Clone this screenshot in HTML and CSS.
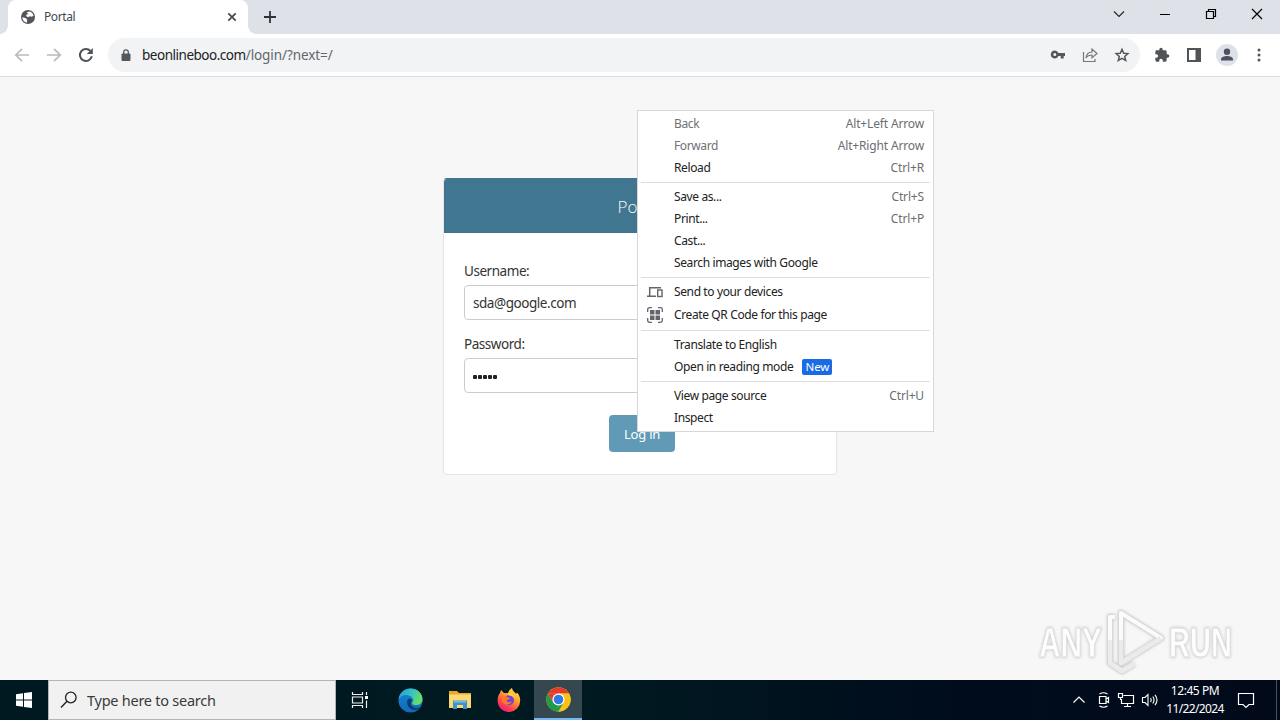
FILE: index.html
```html
<!DOCTYPE html>
<html lang="en">
<head>
<meta charset="utf-8">
<title>Portal</title>
<link rel="stylesheet" href="styles.css">
</head>
<body>
<div class="screen">
  <header class="tabstrip">
    <div class="tab">
      <svg class="globe" width="16" height="16" viewBox="0 0 16 16"><circle cx="8" cy="8" r="7" fill="#53575c"/><path d="M2.300 8.300L5.500 9l1.700 1.500-.4 3.200C4.500 13.300 2.300 11.300 2.300 8.300zM6.500 3.200l3-.7c2 .5 3.500 2 4 4l-1.500 1.300-2.200-.5L8 8.200 6.200 7l.3-1.500L8.500 5z" fill="#fff"/></svg>
      <span class="tab-title">Portal</span>
      <svg class="tab-close" width="10" height="10" viewBox="0 0 10 10"><path d="M1.300 1.300l7.400 7.400M8.700 1.300L1.300 8.700" stroke="#45494d" stroke-width="1.700"/></svg>
    </div>
    <svg class="new-tab" width="14" height="14" viewBox="0 0 14 14"><path d="M7 1v12M1 7h12" stroke="#2f3236" stroke-width="1.800"/></svg>
    <div class="window-controls">
      <svg width="12" height="12" viewBox="0 0 12 12"><path d="M1 3.500l5 5 5-5" fill="none" stroke="#222" stroke-width="1.100"/></svg>
      <svg width="12" height="12" viewBox="0 0 12 12"><path d="M1 6.500h10" stroke="#000"/></svg>
      <svg width="12" height="12" viewBox="0 0 12 12"><path d="M1.500 3.500h7v7h-7zM3.500 3.500v-2h7v7h-2" fill="none" stroke="#000" stroke-width="1.200"/></svg>
      <svg width="12" height="12" viewBox="0 0 12 12"><path d="M1 1l10 10M11 1L1 11" stroke="#000" stroke-width="1.200"/></svg>
    </div>
  </header>
  <nav class="toolbar">
    <svg class="nav-icon" viewBox="0 0 16 16"><path d="M15 8H2M8 1.800L1.800 8 8 14.200" fill="none" stroke="#b9bbbe" stroke-width="1.700"/></svg>
    <svg class="nav-icon" viewBox="0 0 16 16"><path d="M1 8h13M8 1.800L14.200 8 8 14.200" fill="none" stroke="#b9bbbe" stroke-width="1.700"/></svg>
    <svg class="nav-icon" viewBox="0 0 16 16"><path d="M13.800 9.300A6 6 0 1 1 12.400 3.900" fill="none" stroke="#4e5256" stroke-width="2"/><path d="M14.800 1v6H8.800z" fill="#4e5256"/></svg>
    <div class="omnibox">
      <svg width="10" height="13" viewBox="0 0 10 13"><rect x=".5" y="4.500" width="9" height="7.500" rx="1" fill="#54585d"/><path d="M2.700 5V3.200a2.300 2.300 0 0 1 4.600 0V5" fill="none" stroke="#54585d" stroke-width="1.300"/></svg>
      <span class="url"><span class="url-host">beonlineboo.com</span><span class="url-path">/login/?next=/</span></span>
      <div class="omni-actions">
        <svg width="16" height="16" viewBox="0 0 16 16"><path fill="#54585d" fill-rule="evenodd" d="M4.800 3.500a4 4 0 1 0 3.700 5.600h2.200v2.300h3V9.100H15V6H8.500a4 4 0 0 0-3.700-2.500zm0 2.600a1.500 1.500 0 1 1 0 3 1.500 1.500 0 0 1 0-3z"/></svg>
        <svg width="16" height="16" viewBox="0 0 16 16"><path d="M1.500 5v9.500h11.500V12" fill="none" stroke="#74787c" stroke-width="1.200"/><path d="M10 5V2l5 4.500-5 4.200V8C7 8 5.400 8.800 4 11c.3-3.500 2.500-5.800 6-6z" fill="none" stroke="#74787c" stroke-width="1.200"/></svg>
        <svg width="16" height="16" viewBox="0 0 16 16"><path d="M8 2.300l1.700 3.900 4.200.4-3.200 2.800 1 4.100L8 11.400l-3.700 2.100 1-4.100-3.200-2.800 4.200-.4z" fill="none" stroke="#54585d" stroke-width="1.500"/></svg>
      </div>
    </div>
    <div class="toolbar-actions">
      <svg width="16" height="16" viewBox="0 0 24 24"><path fill="#505459" d="M20.500 11H19V7a2 2 0 0 0-2-2h-4V3.500a2.500 2.500 0 0 0-5 0V5H4a2 2 0 0 0-2 2v3.800h1.500a2.700 2.700 0 0 1 0 5.400H2V20a2 2 0 0 0 2 2h3.800v-1.500a2.700 2.700 0 0 1 5.400 0V22H17a2 2 0 0 0 2-2v-4h1.500a2.500 2.500 0 0 0 0-5z"/></svg>
      <svg width="16" height="16" viewBox="0 0 16 16"><path fill="#505459" fill-rule="evenodd" d="M1 1h14v14H1zm2 2v10h6.500V3z"/></svg>
      <svg width="22" height="22" viewBox="0 0 22 22"><circle cx="11" cy="11" r="11" fill="#dfe1e9"/><circle cx="11" cy="7.700" r="3.200" fill="#4b5160"/><path d="M5 16.500v-1.300c0-2 3.500-3.200 6-3.200s6 1.200 6 3.200v1.300z" fill="#4b5160"/></svg>
      <svg width="4" height="16" viewBox="0 0 4 16"><g fill="#505459"><circle cx="2" cy="3" r="1.500"/><circle cx="2" cy="8" r="1.500"/><circle cx="2" cy="13" r="1.500"/></g></svg>
    </div>
  </nav>

  <main class="page">
    <form class="card">
      <h1 class="card-header">Portal</h1>
      <div class="card-body">
        <label class="label">Username:</label>
        <div class="field"><span>sda@google.com</span></div>
        <label class="label">Password:</label>
        <div class="field"><i class="dot"></i><i class="dot"></i><i class="dot"></i><i class="dot"></i><i class="dot"></i></div>
        <button class="login" type="button">Log in</button>
      </div>
    </form>
  </main>

  <footer class="taskbar">
    <div class="start"><svg width="16" height="16" viewBox="0 0 16 16"><path fill="#fff" d="M0 2.200L7 1.200V7.400H0zM8 1.100L16 0v7.400H8zM0 8.400h7v6.400l-7-1zM8 8.400h8V16l-8-1.100z"/></svg></div>
    <div class="search">
      <svg width="18" height="18" viewBox="0 0 18 18"><circle cx="10.800" cy="6.500" r="5.300" fill="none" stroke="#222" stroke-width="1.300"/><path d="M7 10.300L1 16.500" stroke="#222" stroke-width="1.400"/></svg>
      <span class="search-text">Type here to search</span>
    </div>
    <div class="apps">
      <div class="app"><svg width="18" height="18" viewBox="0 0 18 18"><path d="M1.500 1v2.500h10V1M1.500 17v-2.500h10V17M1.500 6h10v6h-10zM15.500 1v3M15.500 9.500V17" fill="none" stroke="#e8eef0" stroke-width="1.200"/><path d="M14 5h3v3h-3z" fill="#fff"/></svg></div>
      <div class="app"><svg width="25" height="25" viewBox="0 0 25 25">
        <defs><linearGradient id="eg" x1="0" y1="0" x2="1" y2=".4"><stop offset="0" stop-color="#239ed5"/><stop offset=".55" stop-color="#35c1c7"/><stop offset="1" stop-color="#68dc67"/></linearGradient><linearGradient id="eb" x1="0" y1="0" x2="0" y2="1"><stop offset="0" stop-color="#1688d6"/><stop offset="1" stop-color="#1268b8"/></linearGradient></defs>
        <circle cx="12.500" cy="12.500" r="12" fill="url(#eb)"/>
        <path d="M.6 11.500C1.500 4.500 6.500.5 12.500.5c7 0 12 5 12 10.500 0 4-3 6-6.500 6-2.500 0-4-.8-4-1.800 0-.7 1.200-1.200 1.200-3.200C15.200 9.500 12 7 8 7 4.500 7 1.800 8.800.6 11.500z" fill="url(#eg)"/>
        <path d="M9.500 12c-1.500 5 2 9.500 7 10 2.500 0 4.500-1 6-2.500-3 1-8 .8-9.500-3C12.500 14 14 13 14 11.500c-1.500-1.300-3.800-1-4.500.5z" fill="#0b3d70"/></svg></div>
      <div class="app"><svg width="22" height="20" viewBox="0 0 22 20"><path d="M0 1h8l2 2h12v15H0z" fill="#e9a82b"/><path d="M0 4.500h22V18H0z" fill="#fcd873"/><path d="M4 19v-8.500h14V19h-4v-4H8v4z" fill="#3f93cf"/><path d="M5 11h12v1.500H5z" fill="#79bce5"/></svg></div>
      <div class="app fox"><svg width="24" height="24" viewBox="0 0 24 24"><defs><linearGradient id="fx" x1=".8" y1="0" x2=".2" y2="1"><stop offset="0" stop-color="#fff044"/><stop offset=".4" stop-color="#ff9a2e"/><stop offset=".75" stop-color="#ff3b50"/><stop offset="1" stop-color="#e31587"/></linearGradient></defs>
        <path d="M3 5l1-3 3 3c1 0 3-.2 4 .2C11.500 3 13 1 15 0c.3 3 3 4 4.200 6l.7-1.500c2 2 3.300 4.500 3.300 8A11.300 11.300 0 0 1 .6 13C.5 9.500 1.300 7 3 5z" fill="url(#fx)"/><circle cx="12" cy="12.300" r="5" fill="#7542d6"/><path d="M5 8c2-.5 4 .2 6 1.500 1 .2 2 .4 2 1-1 1.300-3 .8-3.500 2.500 1.500 2 4.500 1 5.500 0-1 4-7 5-9.500 1C4.500 12 5 10 5 8z" fill="#ff782d"/><path d="M11 5c3-.5 7 2 7.500 6.500C17 8.500 14 7.500 11 7z" fill="#ffd33d"/></svg></div>
      <div class="app active"><svg width="25" height="25" viewBox="0 0 24 24"><circle cx="12" cy="12" r="11.700" fill="#fbc116"/><path d="M1.870 6.150A11.700 11.700 0 0 1 22.130 6.150L12 6.150z" fill="#e33b2e"/><path d="M1.870 6.150L6.940 14.930 12 18l-1 5.660A11.700 11.700 0 0 1 1.870 6.150z" fill="#229a4c"/><path d="M12 23.700L17.060 14.930 12 12l-5.060 2.930 5.060 3.500-1.500 5.200z" fill="#229a4c"/><path d="M22.130 6.150A11.700 11.700 0 0 1 12 23.700L17.060 14.930 12 6.150z" fill="#fbc116"/><path d="M1.870 6.150L7 15l5-3V6.150z" fill="#e33b2e"/><circle cx="12" cy="12" r="5.850" fill="#fff"/><circle cx="12" cy="12" r="4.600" fill="#3279e6"/></svg></div>
    </div>
    <div class="tray">
      <svg width="14" height="14" viewBox="0 0 14 14"><path d="M1.500 9.500L7 4l5.500 5.500" fill="none" stroke="#fff" stroke-width="1.200"/></svg>
      <svg width="14" height="18" viewBox="0 0 14 18"><path d="M2.500 5.500h6.500v7H2.500zM9 8l2.500-1.500v5L9 10M2.500 3q4-2.500 8 0M2.500 15q4 2.500 8 0" fill="none" stroke="#fff" stroke-width="1.200"/></svg>
      <svg width="18" height="16" viewBox="0 0 18 16"><path d="M6.500 3.500h10v8H4.500V7M10.500 11.500v3M7 14.500h7M1.500 1.500h4v4h-4zM3.500 5.500V8" fill="none" stroke="#fff" stroke-width="1.200"/></svg>
      <svg width="18" height="16" viewBox="0 0 18 16"><path d="M1.500 5.500h2.500l3-3v11l-3-3H1.500zM9.500 6q1.400 2 0 4M11.800 4.500q2.500 3.500 0 7M14 2.800q4 5.200 0 10.400" fill="none" stroke="#fff" stroke-width="1.100"/></svg>
      <div class="clock"><span class="time">12:45 PM</span><span class="date">11/22/2024</span></div>
      <svg width="18" height="18" viewBox="0 0 18 18"><path d="M1.500 2.500h15v11H12l-3 3-3-3H1.500z" fill="none" stroke="#fff" stroke-width="1.200"/></svg>
    </div>
  </footer>

  <div class="menu">
    <div class="item disabled"><span>Back</span><span class="key">Alt+Left Arrow</span></div>
    <div class="item disabled"><span>Forward</span><span class="key">Alt+Right Arrow</span></div>
    <div class="item"><span>Reload</span><span class="key">Ctrl+R</span></div>
    <hr class="sep">
    <div class="item"><span>Save as...</span><span class="key">Ctrl+S</span></div>
    <div class="item"><span>Print...</span><span class="key">Ctrl+P</span></div>
    <div class="item"><span>Cast...</span></div>
    <div class="item"><span>Search images with Google</span></div>
    <hr class="sep">
    <div class="item"><svg class="menu-icon" viewBox="0 0 16 16"><path d="M14 3.800H2.700V12M0 12.300h9" fill="none" stroke="#62666a" stroke-width="1.500"/><rect x="10.700" y="6" width="4.300" height="6.500" fill="none" stroke="#62666a" stroke-width="1.400"/></svg><span>Send to your devices</span></div>
    <div class="item tall"><svg class="menu-icon" viewBox="0 0 16 16"><path d="M.7 5V2.500Q.7.700 2.500.7H5M11 .7h2.500q1.800 0 1.800 1.800V5M15.300 11v2.500q0 1.800-1.800 1.800H11M5 15.300H2.500Q.7 15.300.7 13.500V11" fill="none" stroke="#62666a" stroke-width="1.300"/><path d="M3 3h4.500v4.500H3zM8.500 3H13v4.500H8.500zM3 8.500h4.500V13H3zM8.500 8.500H13V13H8.500z" fill="#62666a"/></svg><span>Create QR Code for this page</span></div>
    <hr class="sep">
    <div class="item"><span>Translate to English</span></div>
    <div class="item"><span>Open in reading mode</span><span class="badge">New</span></div>
    <hr class="sep">
    <div class="item"><span>View page source</span><span class="key">Ctrl+U</span></div>
    <div class="item"><span>Inspect</span></div>
  </div>

  <svg class="watermark" width="230" height="70" viewBox="0 0 230 70">
    <g fill="#fdfdfd" stroke="#dcdcdc" stroke-width=".8">
      <text x="8" y="51" textLength="63" lengthAdjust="spacingAndGlyphs">ANY</text>
      <text x="138" y="51" textLength="63" lengthAdjust="spacingAndGlyphs">RUN</text>
    </g>
    <g fill="none" stroke-linejoin="round">
      <path id="play" d="M84 11h-5v46l12 8 12-7M90 7v50l40-25z" stroke="#d8d8d8" stroke-width="6"/>
      <path d="M84 11h-5v46l12 8 12-7M90 7v50l40-25z" stroke="#fbfbfb" stroke-width="4"/>
      <path d="M79 34v23l12 8 12-7M90 34v23l40-25" stroke="#ebebeb" stroke-width="4"/>
    </g>
  </svg>
</div>
</body>
</html>
```
FILE: styles.css
```css
* { box-sizing: border-box; }
body { margin: 0; font-family: "Noto Sans", "Open Sans", sans-serif; }
svg { display: block; flex: none; }
.screen { position: relative; width: 1280px; height: 720px; display: flex; flex-direction: column; overflow: hidden; background: #f7f7f7; white-space: nowrap; }

.tabstrip { height: 34px; flex: none; display: flex; align-items: center; background: #dee1e8; padding-left: 8px; }
.tab { position: relative; width: 240px; height: 34px; display: flex; align-items: center; padding: 0 11px 0 12px; background: #fff; border-radius: 8px 8px 0 0; }
.tab::before, .tab::after { content: ""; position: absolute; bottom: 0; width: 8px; height: 8px; }
.tab::before { left: -8px; background: radial-gradient(circle at 0 0, #dee1e8 7.500px, #fff 8px); }
.tab::after { right: -8px; background: radial-gradient(circle at 100% 0, #dee1e8 7.500px, #fff 8px); }
.tab-title { margin-left: 8px; padding-bottom: 1px; font-size: 12px; letter-spacing: -0.4px; color: #45484c; }
.tab-close { margin-left: auto; }
.new-tab { margin-left: 15px; }
.window-controls { margin: -6px 17px 0 auto; display: flex; gap: 34px; }

.toolbar { height: 43px; flex: none; display: flex; align-items: center; padding-left: 14px; background: #fff; border-bottom: 1px solid #dcdddf; }
.nav-icon { width: 16px; height: 16px; margin-right: 16px; }
.omnibox { width: 1032px; height: 34px; margin-left: -2px; display: flex; align-items: center; padding: 0 10px 0 13px; border-radius: 17px; background: #f1f3f5; }
.url { margin-left: 11px; font-size: 13.500px; }
.url-host { color: #202124; letter-spacing: -0.480px; }
.url-path { color: #63676b; letter-spacing: -0.080px; }
.omni-actions { margin-left: auto; display: flex; gap: 16px; }
.toolbar-actions { margin-left: 14px; display: flex; align-items: center; gap: 15px; }
.toolbar-actions svg:nth-child(2) { margin: 0 -1px 0 1px; }
.toolbar-actions svg:last-child { margin-left: 4px; }

.page { flex: 1; display: flex; justify-content: center; align-items: flex-start; padding-top: 101px; background: #f7f7f7; }
.card { width: 394px; height: 297px; background: #fff; border: 1px solid #e5e5e5; border-top-color: #417690; border-radius: 4px; overflow: hidden; }
.card-header { margin: 0; height: 54px; background: #417690; color: #f4f8fa; font: 300 17px/56px "Open Sans", sans-serif; text-align: center; }
.card-body { padding: 27px 20px 0; display: flex; flex-direction: column; }
.label { height: 25px; line-height: 22px; font-size: 13.500px; letter-spacing: -0.450px; color: #333; }
.field { height: 35px; margin-bottom: 13px; display: flex; align-items: center; gap: 1px; padding: 0 8px; border: 1px solid #ccc; border-radius: 4px; font-size: 13.500px; letter-spacing: -0.450px; color: #333; }
.dot { width: 4px; height: 4px; margin-top: 2px; border-radius: 1px; background: #222; }
.login { align-self: center; width: 66px; height: 37px; margin: 9px 0 0 4px; padding: 0; border: 0; border-radius: 4px; background: #609ab6; color: #fff; font: 13px "Noto Sans", sans-serif; letter-spacing: -0.200px; }

.menu { position: absolute; left: 637px; top: 110px; width: 297px; height: 322px; padding: 2px 0; background: #fff; border: 1px solid #d7d7d7; font-size: 12px; letter-spacing: -0.380px; color: #222; }
.item { height: 22px; display: flex; align-items: center; padding: 0 9px 0 36px; }
.item span { padding-bottom: 1px; }
.tall { height: 24px; }
.disabled { color: #707274; }
.key { margin-left: auto; color: #6b6e71; letter-spacing: -0.150px; }
.sep { height: 1px; margin: 3px 3px; border: 0; background: #dcdddf; }
.menu-icon { width: 16px; height: 16px; margin-left: -27px; margin-right: 11px; }
.badge { height: 16px; width: 30px; margin-left: 9px; text-align: center; line-height: 16px; border-radius: 2px; background: #1a6be6; color: #fff; font-size: 11.500px; letter-spacing: -0.200px; }

.taskbar { height: 40px; flex: none; display: flex; background: linear-gradient(90deg, #001820, #001a21 45%, #000c1c 75%, #020a1a); }
.start { width: 48px; display: flex; align-items: center; justify-content: center; }
.search { width: 288px; display: flex; align-items: center; padding-left: 11px; background: #f1f1f1; border: 1px solid #b4b4b4; }
.search-text { margin-left: 9px; font-size: 14.500px; letter-spacing: -0.250px; color: #3a3a3a; }
.apps { display: flex; }
.app { width: 50px; display: flex; align-items: center; justify-content: center; }
.app:first-child { width: 49px; padding-right: 1px; }
.fox { padding-right: 2px; }
.active { width: 48px; margin-left: -1px; background: #35474f; border-bottom: 2px solid #76b9ed; }
.tray { margin-left: auto; width: 205px; display: flex; align-items: center; gap: 6px; color: #fff; border-right: 1px solid #475260; margin-right: 3px; }
.tray > svg:nth-child(1) { margin-right: 5px; }
.clock { width: 60px; display: flex; flex-direction: column; align-items: center; line-height: 18px; font-size: 12px; padding-bottom: 1px; }
.time { letter-spacing: -0.450px; }
.date { letter-spacing: -0.620px; }
.tray > svg:last-child { margin-left: 6px; }
.watermark { position: absolute; left: 1031px; top: 606px; font: 700 43px "Liberation Sans", sans-serif; filter: drop-shadow(0 0 1.500px #c4c4c4); }
```
